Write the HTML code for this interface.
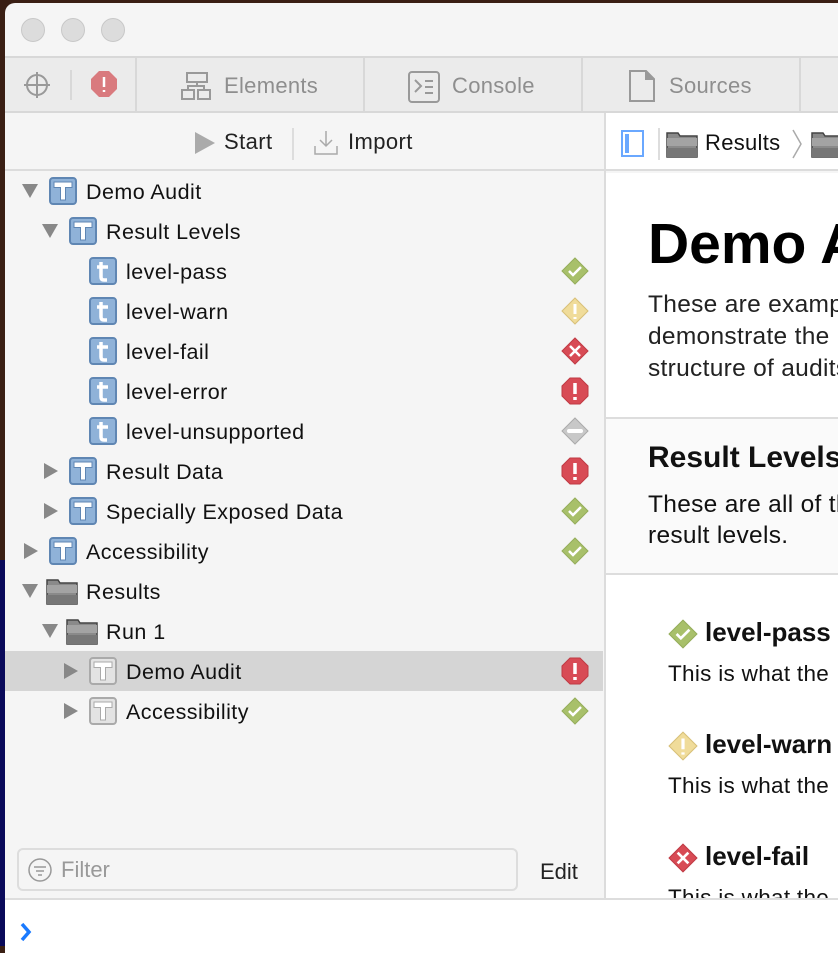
<!DOCTYPE html>
<html><head><meta charset="utf-8"><style>
*{margin:0;padding:0;box-sizing:border-box}
body{width:838px;height:946px;overflow:hidden;background:#3a1f14;font-family:"Liberation Sans",sans-serif;position:relative}
.nav{position:absolute;left:0;top:560px;width:8px;height:386px;background:#0a0a5a}
.win{position:absolute;left:5px;top:3px;width:840px;height:950px;background:#f5f5f5;border-radius:10px 0 0 0;overflow:hidden}
.abs{position:absolute}
.dot{position:absolute;top:15px;width:24px;height:24px;border-radius:50%;background:#dcdcdc;border:1px solid #c8c8c8}
.tabs{position:absolute;left:0;top:53px;width:840px;height:57px;background:#ebebeb;border-top:2px solid #d8d8d8;border-bottom:2px solid #d8d8d8}
.tab{position:absolute;top:0;height:55px;border-left:2px solid #d8d8d8;color:#8e8e8e;font-size:22px;letter-spacing:.3px;line-height:55px}
.row{position:absolute;left:0;width:598px;height:40px;font-size:21.5px;letter-spacing:.45px;line-height:40px;color:#111}
.row .tri{position:absolute;top:0}
.row .ic{position:absolute;top:8px}
.row .st{position:absolute;left:556px;top:6px}
.txt{position:absolute;top:1px}
</style></head><body>
<div class="nav"></div>
<div class="win">
<div class="dot" style="left:16px"></div><div class="dot" style="left:56px"></div><div class="dot" style="left:96px"></div>
<div class="tabs">
 <svg class="abs" style="left:17px;top:12px" width="30" height="30" viewBox="0 0 30 30" fill="none" stroke="#999" stroke-width="2"><circle cx="15" cy="15" r="10"/><path d="M15 2v26M2 15h26"/></svg>
 <div class="abs" style="left:65px;top:12px;width:2px;height:30px;background:#d8d8d8"></div>
 <svg class="abs" style="left:85px;top:12px" width="28" height="28" viewBox="0 0 28 28"><path d="M9 1h10l8 8v10l-8 8H9l-8-8V9z" fill="#d97a7e"/><path d="M14 7v10M14 20v2" stroke="#fff" stroke-width="2.5"/></svg>
 <div class="tab" style="left:130px;width:230px"><svg class="abs" style="left:44px;top:13px" width="30" height="30" viewBox="0 0 30 30" fill="none" stroke="#999" stroke-width="2"><rect x="6" y="2" width="20" height="9"/><rect x="1" y="19" width="12" height="9"/><rect x="17" y="19" width="12" height="9"/><path d="M16 11v4M7 19v-4h16v4"/></svg><span style="position:absolute;left:87px">Elements</span></div>
 <div class="tab" style="left:358px;width:218px"><svg class="abs" style="left:43px;top:13px" width="32" height="32" viewBox="0 0 32 32" fill="none" stroke="#999" stroke-width="2"><rect x="1" y="1" width="30" height="30" rx="3"/><path d="M7 9l6 6-6 6M17 10h8M17 16h8M17 22h8"/></svg><span style="position:absolute;left:87px">Console</span></div>
 <div class="tab" style="left:576px;width:218px"><svg class="abs" style="left:46px;top:12px" width="26" height="32" viewBox="0 0 26 32" fill="none" stroke="#999" stroke-width="2"><path d="M1 1h16l8 8v22H1z"/><path d="M17 1v8h8" fill="#999"/></svg><span style="position:absolute;left:86px">Sources</span></div>
 <div class="tab" style="left:794px;width:50px"></div>
</div>
<div class="abs" style="left:0;top:110px;width:599px;height:58px;border-bottom:2px solid #dcdcdc;font-size:22px;letter-spacing:.4px;color:#222">
 <svg class="abs" style="left:189px;top:18px" width="22" height="24"><path d="M1 1l20 11L1 23z" fill="#aaa"/></svg>
 <span class="abs" style="left:219px;top:16px">Start</span>
 <div class="abs" style="left:287px;top:15px;width:2px;height:32px;background:#ddd"></div>
 <svg class="abs" style="left:309px;top:17px" width="24" height="26" fill="none" stroke="#aaa" stroke-width="1.5"><path d="M12 1v15M6 10l6 6 6-6M1 16v8h22v-8"/></svg>
 <span class="abs" style="left:343px;top:16px">Import</span>
</div>
<div class="abs" style="left:599px;top:110px;width:2px;height:790px;background:#dcdcdc"></div>

<svg width="0" height="0" style="position:absolute">
<defs>
<symbol id="T" viewBox="0 0 28 28"><rect x="1" y="1" width="26" height="26" rx="3" fill="#8fb2d8" stroke="#5f86b3" stroke-width="2"/><path d="M5 5h18v5.5h-6.5V23h-5V10.5H5z" fill="#fff" stroke="#5f86b3" stroke-width="1"/></symbol>
<symbol id="TG" viewBox="0 0 28 28"><rect x="1" y="1" width="26" height="26" rx="3" fill="#e3e3e3" stroke="#aaa" stroke-width="2"/><path d="M5 5h18v5.5h-6.5V23h-5V10.5H5z" fill="#fff" stroke="#aaa" stroke-width="1"/></symbol>
<symbol id="t" viewBox="0 0 28 28"><rect x="1" y="1" width="26" height="26" rx="3" fill="#8fb2d8" stroke="#5f86b3" stroke-width="2"/><path d="M12 5v15q0 3 3 3h3" fill="none" stroke="#fff" stroke-width="3.5"/><path d="M8 10h11" stroke="#fff" stroke-width="3.5"/></symbol>
<symbol id="F" viewBox="0 0 32 28"><path d="M1 3h11l2 3h17v21H1z" fill="#8a8a8a" stroke="#444" stroke-width="1.5"/><rect x="1" y="8" width="30" height="8" fill="#a3a3a3"/><rect x="1" y="18" width="30" height="9" fill="#777"/></symbol>
<symbol id="pass" viewBox="0 0 28 28"><path d="M14 1l13 13-13 13L1 14z" fill="#a8c06a" stroke="#95ad5a"/><path d="M8 14l4 4 8-8" fill="none" stroke="#fff" stroke-width="2.5"/></symbol>
<symbol id="warn" viewBox="0 0 28 28"><path d="M14 1l13 13-13 13L1 14z" fill="#f0dc9a" stroke="#d8c078"/><path d="M14 7v10M14 20v2" stroke="#fff" stroke-width="3"/></symbol>
<symbol id="fail" viewBox="0 0 28 28"><path d="M14 1l13 13-13 13L1 14z" fill="#d84b55" stroke="#c03a44"/><path d="M9 9l10 10M19 9L9 19" stroke="#fff" stroke-width="2.5"/></symbol>
<symbol id="err" viewBox="0 0 28 28"><path d="M9 1h10l8 8v10l-8 8H9l-8-8V9z" fill="#d84b55" stroke="#c03a44"/><path d="M14 6v11M14 20v3" stroke="#fff" stroke-width="3.5"/></symbol>
<symbol id="uns" viewBox="0 0 28 28"><path d="M14 1l13 13-13 13L1 14z" fill="#c8c8c8" stroke="#aaa"/><path d="M8 14h12" stroke="#fff" stroke-width="4" stroke-linecap="round"/></symbol>
<symbol id="down" viewBox="0 0 16 14"><path d="M0 0h16L8 14z" fill="#888"/></symbol>
<symbol id="right" viewBox="0 0 14 16"><path d="M0 0l14 8-14 8z" fill="#888"/></symbol>
</defs></svg>

<div class="row" style="top:168px"><svg class="tri" style="left:17px;top:13px" width="16" height="14"><use href="#down"/></svg><svg class="ic" style="left:44px;top:6px" width="28" height="28"><use href="#T"/></svg><span class="txt" style="left:81px">Demo Audit</span></div>
<div class="row" style="top:208px"><svg class="tri" style="left:37px;top:13px" width="16" height="14"><use href="#down"/></svg><svg class="ic" style="left:64px;top:6px" width="28" height="28"><use href="#T"/></svg><span class="txt" style="left:101px">Result Levels</span></div>
<div class="row" style="top:248px"><svg class="ic" style="left:84px;top:6px" width="28" height="28"><use href="#t"/></svg><span class="txt" style="left:121px">level-pass</span><svg class="st" width="28" height="28"><use href="#pass"/></svg></div>
<div class="row" style="top:288px"><svg class="ic" style="left:84px;top:6px" width="28" height="28"><use href="#t"/></svg><span class="txt" style="left:121px">level-warn</span><svg class="st" width="28" height="28"><use href="#warn"/></svg></div>
<div class="row" style="top:328px"><svg class="ic" style="left:84px;top:6px" width="28" height="28"><use href="#t"/></svg><span class="txt" style="left:121px">level-fail</span><svg class="st" width="28" height="28"><use href="#fail"/></svg></div>
<div class="row" style="top:368px"><svg class="ic" style="left:84px;top:6px" width="28" height="28"><use href="#t"/></svg><span class="txt" style="left:121px">level-error</span><svg class="st" width="28" height="28"><use href="#err"/></svg></div>
<div class="row" style="top:408px"><svg class="ic" style="left:84px;top:6px" width="28" height="28"><use href="#t"/></svg><span class="txt" style="left:121px">level-unsupported</span><svg class="st" width="28" height="28"><use href="#uns"/></svg></div>
<div class="row" style="top:448px"><svg class="tri" style="left:39px;top:12px" width="14" height="16"><use href="#right"/></svg><svg class="ic" style="left:64px;top:6px" width="28" height="28"><use href="#T"/></svg><span class="txt" style="left:101px">Result Data</span><svg class="st" width="28" height="28"><use href="#err"/></svg></div>
<div class="row" style="top:488px"><svg class="tri" style="left:39px;top:12px" width="14" height="16"><use href="#right"/></svg><svg class="ic" style="left:64px;top:6px" width="28" height="28"><use href="#T"/></svg><span class="txt" style="left:101px">Specially Exposed Data</span><svg class="st" width="28" height="28"><use href="#pass"/></svg></div>
<div class="row" style="top:528px"><svg class="tri" style="left:19px;top:12px" width="14" height="16"><use href="#right"/></svg><svg class="ic" style="left:44px;top:6px" width="28" height="28"><use href="#T"/></svg><span class="txt" style="left:81px">Accessibility</span><svg class="st" width="28" height="28"><use href="#pass"/></svg></div>
<div class="row" style="top:568px"><svg class="tri" style="left:17px;top:13px" width="16" height="14"><use href="#down"/></svg><svg class="ic" style="left:41px;top:6px" width="32" height="28"><use href="#F"/></svg><span class="txt" style="left:81px">Results</span></div>
<div class="row" style="top:608px"><svg class="tri" style="left:37px;top:13px" width="16" height="14"><use href="#down"/></svg><svg class="ic" style="left:61px;top:6px" width="32" height="28"><use href="#F"/></svg><span class="txt" style="left:101px">Run 1</span></div>
<div class="row" style="top:648px;background:#d5d5d5"><svg class="tri" style="left:59px;top:12px" width="14" height="16"><use href="#right"/></svg><svg class="ic" style="left:84px;top:6px" width="28" height="28"><use href="#TG"/></svg><span class="txt" style="left:121px">Demo Audit</span><svg class="st" width="28" height="28"><use href="#err"/></svg></div>
<div class="row" style="top:688px"><svg class="tri" style="left:59px;top:12px" width="14" height="16"><use href="#right"/></svg><svg class="ic" style="left:84px;top:6px" width="28" height="28"><use href="#TG"/></svg><span class="txt" style="left:121px">Accessibility</span><svg class="st" width="28" height="28"><use href="#pass"/></svg></div>

<div class="abs" style="left:12px;top:845px;width:501px;height:43px;border:2px solid #ddd;border-radius:6px;font-size:22px;color:#999;line-height:39px">
 <svg class="abs" style="left:9px;top:8px" width="24" height="24" fill="none" stroke="#999" stroke-width="1.5"><circle cx="12" cy="12" r="11"/><path d="M6 9h12M8 13h8M10 17h4"/></svg>
 <span class="abs" style="left:42px">Filter</span></div>
<span class="abs" style="left:535px;top:856px;font-size:22px;color:#222">Edit</span>

<div class="abs" style="left:601px;top:110px;width:240px;height:58px;background:#fff;border-bottom:2px solid #dcdcdc">
 <div class="abs" style="left:15px;top:17px;width:23px;height:27px;border:2px solid #6aa8ff"><div style="position:absolute;left:2px;top:2px;width:4px;height:19px;background:#6aa8ff"></div></div>
 <div class="abs" style="left:52px;top:15px;width:2px;height:32px;background:#ddd"></div>
 <svg class="abs" style="left:60px;top:17px" width="32" height="28"><use href="#F"/></svg>
 <span class="abs" style="left:99px;top:17px;font-size:22px;letter-spacing:.3px;color:#111">Results</span>
 <svg class="abs" style="left:185px;top:16px" width="12" height="30" fill="none" stroke="#aaa" stroke-width="1.5"><path d="M2 1l8 14-8 14"/></svg>
 <svg class="abs" style="left:205px;top:17px" width="32" height="28"><use href="#F"/></svg>
</div>
<div class="abs" style="left:601px;top:170px;width:240px;height:730px;background:#fff;white-space:nowrap;overflow:hidden">
 <div class="abs" style="left:42px;top:38px;font-size:57px;font-weight:bold;color:#000">Demo Audit</div>
 <div class="abs" style="left:42px;top:116px;font-size:24.5px;letter-spacing:.3px;line-height:32px;color:#222">These are examples to<br>demonstrate the<br>structure of audits</div>
 <div class="abs" style="left:0;top:244px;width:240px;height:158px;background:#fafafa;border-top:2px solid #ddd;border-bottom:2px solid #ddd">
  <div class="abs" style="left:42px;top:22px;font-size:30px;font-weight:bold;color:#111">Result Levels</div>
  <div class="abs" style="left:42px;top:70px;font-size:24.5px;letter-spacing:.3px;line-height:31px;color:#111">These are all of the<br>result levels.</div>
 </div>
 <svg class="abs" style="left:62px;top:446px" width="30" height="30"><use href="#pass"/></svg>
 <div class="abs" style="left:99px;top:444px;font-size:26px;font-weight:bold;color:#111">level-pass</div>
 <div class="abs" style="left:62px;top:488px;font-size:22.5px;letter-spacing:.3px;color:#111">This is what the</div>
 <svg class="abs" style="left:62px;top:558px" width="30" height="30"><use href="#warn"/></svg>
 <div class="abs" style="left:99px;top:556px;font-size:26px;font-weight:bold;color:#111">level-warn</div>
 <div class="abs" style="left:62px;top:600px;font-size:22.5px;letter-spacing:.3px;color:#111">This is what the</div>
 <svg class="abs" style="left:62px;top:670px" width="30" height="30"><use href="#fail"/></svg>
 <div class="abs" style="left:99px;top:668px;font-size:26px;font-weight:bold;color:#111">level-fail</div>
 <div class="abs" style="left:62px;top:712px;font-size:22.5px;letter-spacing:.3px;color:#111">This is what the</div>
</div>
<div class="abs" style="left:0;top:895px;width:840px;height:60px;background:#fff;border-top:2px solid #ddd">
 <svg class="abs" style="left:14px;top:22px" width="14" height="20" fill="none" stroke="#1a7aff" stroke-width="3.5"><path d="M3 2l7 8-7 8"/></svg>
</div>
</div>
</body></html>
